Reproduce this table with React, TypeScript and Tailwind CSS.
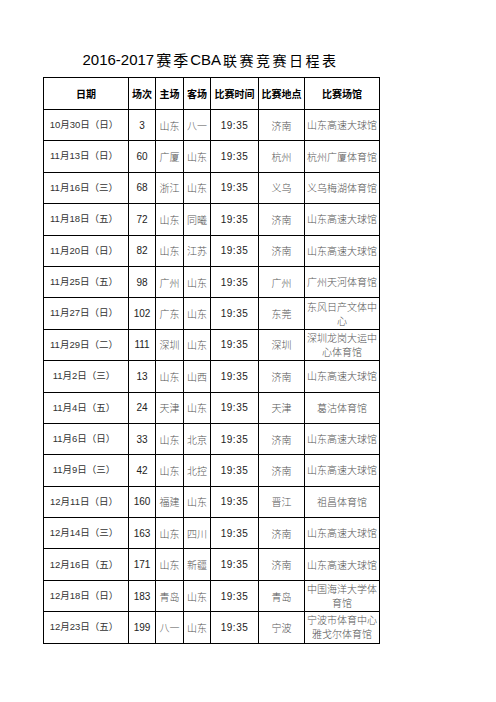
const rows: string[][] = [
  ["10月30日（日）", "3", "山东", "八一", "19:35", "济南", "山东高速大球馆"],
  ["11月13日（日）", "60", "广厦", "山东", "19:35", "杭州", "杭州广厦体育馆"],
  ["11月16日（三）", "68", "浙江", "山东", "19:35", "义乌", "义乌梅湖体育馆"],
  ["11月18日（五）", "72", "山东", "同曦", "19:35", "济南", "山东高速大球馆"],
  ["11月20日（日）", "82", "山东", "江苏", "19:35", "济南", "山东高速大球馆"],
  ["11月25日（五）", "98", "广州", "山东", "19:35", "广州", "广州天河体育馆"],
  ["11月27日（日）", "102", "广东", "山东", "19:35", "东莞", "东风日产文体中心"],
  ["11月29日（二）", "111", "深圳", "山东", "19:35", "深圳", "深圳龙岗大运中心体育馆"],
  ["11月2日（三）", "13", "山东", "山西", "19:35", "济南", "山东高速大球馆"],
  ["11月4日（五）", "24", "天津", "山东", "19:35", "天津", "葛沽体育馆"],
  ["11月6日（日）", "33", "山东", "北京", "19:35", "济南", "山东高速大球馆"],
  ["11月9日（三）", "42", "山东", "北控", "19:35", "济南", "山东高速大球馆"],
  ["12月11日（日）", "160", "福建", "山东", "19:35", "晋江", "祖昌体育馆"],
  ["12月14日（三）", "163", "山东", "四川", "19:35", "济南", "山东高速大球馆"],
  ["12月16日（五）", "171", "山东", "新疆", "19:35", "济南", "山东高速大球馆"],
  ["12月18日（日）", "183", "青岛", "山东", "19:35", "青岛", "中国海洋大学体育馆"],
  ["12月23日（五）", "199", "八一", "山东", "19:35", "宁波", "宁波市体育中心雅戈尔体育馆"],
];

const headers = ["日期", "场次", "主场", "客场", "比赛时间", "比赛地点", "比赛场馆"];
const widths = ["w-[85px]", "w-[27px]", "w-[28px]", "w-[27px]", "w-[48px]", "w-[46px]", "w-[75px]"];

const sans = "font-['Liberation_Sans','Noto_Sans_CJK_SC',sans-serif]";
const cjk = "font-['Noto_Sans_CJK_SC',sans-serif]";

export default function App() {
  return (
    <div className="min-h-screen bg-white pl-[43px] pt-[50px]">
      <div className="flex h-[27px] w-[335px] items-start justify-center font-normal leading-[20px] text-black">
        <span className={`${sans} text-[15px]`}>2016-2017</span>
        <span className={`${cjk} ml-[2px] text-[15px] tracking-[2px]`}>赛季</span>
        <span className={`${sans} text-[15px]`}>CBA</span>
        <span className={`${cjk} ml-[2px] text-[14px] tracking-[2.5px]`}>联赛竞赛日程表</span>
      </div>
      <table className="table-fixed border-collapse border border-black">
        <thead>
          <tr className="h-[32px]">
            {headers.map((h, i) => (
              <th
                className={`${widths[i]} ${cjk} border border-black p-0 text-center text-[10px] font-bold text-black`}
                key={h}
              >
                {h}
              </th>
            ))}
          </tr>
        </thead>
        <tbody>
          {rows.map((r) => (
            <tr className="h-[31.4px]" key={r[0]}>
              <td className={`${sans} border border-black p-0 pr-[4px] text-center text-[9.5px] text-[#333]`}>{r[0]}</td>
              <td className={`${sans} border border-black p-0 text-center text-[10px] text-[#222]`}>{r[1]}</td>
              <td className={`${cjk} border border-black p-0 text-center text-[10px] font-light text-[#555]`}>{r[2]}</td>
              <td className={`${cjk} border border-black p-0 text-center text-[10px] font-light text-[#555]`}>{r[3]}</td>
              <td className={`${sans} border border-black p-0 text-center text-[10px] tracking-[0.5px] text-[#222]`}>{r[4]}</td>
              <td className={`${cjk} border border-black p-0 text-center text-[10px] font-light text-[#555]`}>{r[5]}</td>
              <td className={`${cjk} border border-black px-[1px] py-0 text-center text-[10px] leading-[14px] font-light text-[#555]`}>
                {r[6]}
              </td>
            </tr>
          ))}
        </tbody>
      </table>
    </div>
  );
}
